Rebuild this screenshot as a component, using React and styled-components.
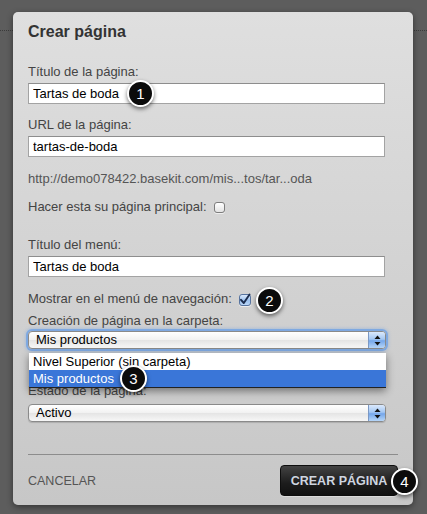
import styled, { createGlobalStyle } from 'styled-components'

const GlobalStyle = createGlobalStyle`
  html, body {
    margin: 0;
    padding: 0;
    background: #5d5d5d;
  }
  body {
    font-family: "Liberation Sans", Arial, Helvetica, sans-serif;
  }
`

const Page = styled.div`
  position: relative;
  box-sizing: border-box;
  width: 427px;
  height: 514px;
  padding: 12px 14px 9px 13px;
  background-color: #5d5d5d;
  background-image: repeating-linear-gradient(to right, #3b3b3b 0 1px, transparent 1px 2px);
  background-size: 100% 1px;
  background-position: 0 30px;
  background-repeat: no-repeat;
`

const Panel = styled.div`
  box-sizing: border-box;
  width: 400px;
  height: 493px;
  padding: 10px 15px 10px;
  border-radius: 5px;
  background: linear-gradient(#dfdfdf, #c7c7c7);
  box-shadow: 0 2px 6px rgba(0, 0, 0, 0.45);
  display: flex;
  flex-direction: column;
`

const Title = styled.h2`
  margin: 0;
  font-size: 16px;
  line-height: 19px;
  font-weight: bold;
  color: #333;
`

const Field = styled.div`
  display: flex;
  flex-direction: column;
  margin-top: ${(p) => p.$top}px;
`

const Label = styled.label`
  font-size: 13px;
  line-height: 15px;
  color: #444;
  margin-bottom: ${(p) => p.$gap ?? 4}px;
`

const TextInput = styled.input`
  box-sizing: border-box;
  width: 357px;
  height: 21px;
  margin: 0;
  padding: 0 4px;
  border: 1px solid #a3a3a3;
  border-top-color: #8d8d8d;
  background: #fff;
  font-family: "Liberation Sans", Arial, sans-serif;
  font-size: 13px;
  color: #000;
  outline: none;
`

const UrlText = styled.div`
  margin-top: ${(p) => p.$top}px;
  font-size: 13px;
  line-height: 15px;
  color: #555;
`

const CheckRow = styled.div`
  display: flex;
  align-items: center;
  gap: 7px;
  margin-top: ${(p) => p.$top}px;
  font-size: 13px;
  line-height: 15px;
  color: #444;
`

const Box = styled.span`
  box-sizing: border-box;
  width: ${(p) => (p.$checked ? 12 : 11)}px;
  height: ${(p) => (p.$checked ? 12 : 11)}px;
  border-radius: 3px;
  border: 1px solid ${(p) => (p.$checked ? '#56739f' : '#7d7d7d')};
  background: ${(p) =>
    p.$checked
      ? 'linear-gradient(#dbe9fb, #9cc1ef 55%, #b9d6f7)'
      : 'linear-gradient(#ffffff, #e3e3e3)'};
  box-shadow: 0 1px 0 rgba(255, 255, 255, 0.6);
  display: flex;
  align-items: center;
  justify-content: center;
  margin-top: 2px;
`

const SelectWrap = styled.div`
  position: relative;
  width: 358px;
`

const SelectBox = styled.div`
  box-sizing: border-box;
  height: 18px;
  display: flex;
  align-items: center;
  border: 1px solid #8a8a8a;
  border-radius: 4px;
  background: linear-gradient(#ffffff, #f1f1f1 50%, #e4e4e4 51%, #f7f7f7);
  box-shadow: ${(p) =>
    p.$focused ? '0 0 0 2px rgba(110, 160, 228, 0.75), 0 0 3px 3px rgba(110, 160, 228, 0.35)' : '0 1px 1px rgba(0,0,0,0.15)'};
  overflow: hidden;
  font-size: 13px;
  color: #000;
`

const SelectText = styled.span`
  flex: 1;
  padding-left: 7px;
  line-height: 16px;
`

const ArrowButton = styled.span`
  width: 16px;
  height: 100%;
  border-left: 1px solid #7b98c4;
  background: linear-gradient(#dbe9fc, #a3c7f3 45%, #74a6ea 55%, #b6d6f8);
  display: flex;
  align-items: center;
  justify-content: center;
`

const OptionList = styled.div`
  position: absolute;
  left: 1px;
  top: 22px;
  width: 357px;
  background: #fff;
  border-bottom: 1px solid #222;
  box-shadow: 0 3px 8px rgba(0, 0, 0, 0.45);
  z-index: 2;
`

const Option = styled.div`
  height: 17px;
  line-height: 17px;
  padding-left: 4px;
  font-size: 13px;
  color: ${(p) => (p.$active ? '#fff' : '#000')};
  background: ${(p) => (p.$active ? '#3a76d8' : '#fff')};
`

const Divider = styled.div`
  margin-top: 32px;
  height: 0;
  border-top: 1px solid #8c8c8c;
`

const Footer = styled.div`
  margin-top: 10px;
  display: flex;
  align-items: center;
  justify-content: space-between;
`

const CancelLink = styled.a`
  font-size: 12.5px;
  color: #555;
  text-decoration: none;
  text-transform: uppercase;
`

const PrimaryButton = styled.button`
  box-sizing: border-box;
  width: 118px;
  height: 31px;
  border: 1px solid #0e0e0e;
  border-radius: 4px;
  background: linear-gradient(#434343, #1c1c1c 60%, #111);
  box-shadow: 0 1px 0 rgba(255, 255, 255, 0.35);
  color: #cfd6e0;
  font-family: "Liberation Sans", Arial, sans-serif;
  font-size: 12.5px;
  font-weight: bold;
  text-transform: uppercase;
  padding: 0;
  text-align: center;
`

const Badge = styled.span`
  position: absolute;
  left: ${(p) => p.$x - 13}px;
  top: ${(p) => p.$y - 13}px;
  box-sizing: border-box;
  width: 27px;
  height: 27px;
  border-radius: 50%;
  border: 2px solid #fff;
  background: #0b0b0b;
  box-shadow: 0 2px 4px rgba(0, 0, 0, 0.55);
  color: #fff;
  font-size: 15px;
  line-height: 23px;
  text-align: center;
  z-index: 3;
`

function Arrows() {
  return (
    <svg width="7" height="11" viewBox="0 0 7 11">
      <polygon points="3.5,0.5 6.5,4 0.5,4" fill="#111" />
      <polygon points="0.5,7 6.5,7 3.5,10.5" fill="#111" />
    </svg>
  )
}

function Check() {
  return (
    <svg width="12" height="12" viewBox="0 0 12 12" style={{ overflow: 'visible' }}>
      <path d="M2 5.8 L4.8 9 L10.5 0.5" fill="none" stroke="#1b2c4d" strokeWidth="1.9" strokeLinecap="round" strokeLinejoin="round" />
    </svg>
  )
}

function Select({ value, focused, children }) {
  return (
    <SelectWrap>
      <SelectBox $focused={focused}>
        <SelectText>{value}</SelectText>
        <ArrowButton>
          <Arrows />
        </ArrowButton>
      </SelectBox>
      {children}
    </SelectWrap>
  )
}

const folders = ['Nivel Superior (sin carpeta)', 'Mis productos']

function App() {
  return (
    <>
      <GlobalStyle />
      <Page>
        <Panel>
          <Title>Crear página</Title>

          <Field $top={23}>
            <Label>Título de la página:</Label>
            <TextInput defaultValue="Tartas de boda" />
          </Field>

          <Field $top={13}>
            <Label>URL de la página:</Label>
            <TextInput defaultValue="tartas-de-boda" />
          </Field>

          <UrlText $top={14}>http://demo078422.basekit.com/mis...tos/tar...oda</UrlText>

          <CheckRow $top={13}>
            Hacer esta su página principal:
            <Box />
          </CheckRow>

          <Field $top={23}>
            <Label>Título del menú:</Label>
            <TextInput defaultValue="Tartas de boda" />
          </Field>

          <CheckRow $top={14}>
            Mostrar en el menú de navegación:
            <Box $checked>
              <Check />
            </Box>
          </CheckRow>

          <Field $top={7}>
            <Label $gap={3}>Creación de página en la carpeta:</Label>
            <Select value="Mis productos" focused>
              <OptionList>
                {folders.map((name) => (
                  <Option key={name} $active={name === 'Mis productos'}>
                    {name}
                  </Option>
                ))}
              </OptionList>
            </Select>
          </Field>

          <Field $top={34}>
            <Label $gap={6}>Estado de la página:</Label>
            <Select value="Activo" />
          </Field>

          <Divider />

          <Footer>
            <CancelLink href="#">Cancelar</CancelLink>
            <PrimaryButton>Crear página</PrimaryButton>
          </Footer>
        </Panel>

        <Badge $x={140} $y={93}>1</Badge>
        <Badge $x={269} $y={300}>2</Badge>
        <Badge $x={133} $y={378}>3</Badge>
        <Badge $x={404} $y={481}>4</Badge>
      </Page>
    </>
  )
}

export default App
